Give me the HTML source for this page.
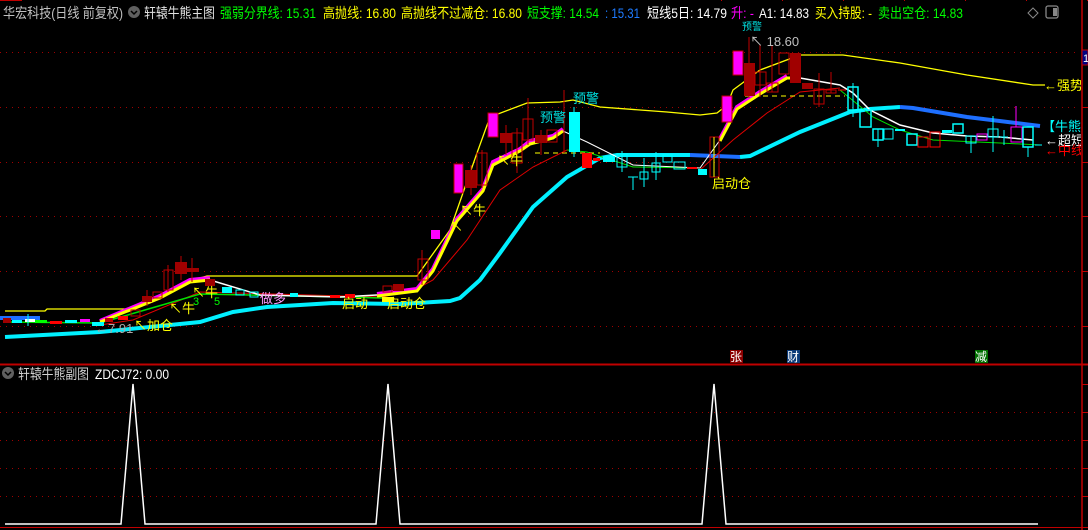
<!DOCTYPE html>
<html><head><meta charset="utf-8"><style>
html,body{margin:0;padding:0;background:#000;}
svg{display:block}
text{font-family:"Liberation Sans","Noto Sans CJK SC",sans-serif;}
</style></head><body>
<svg width="1088" height="530" viewBox="0 0 1088 530" xmlns="http://www.w3.org/2000/svg">
<defs><clipPath id="c"><rect x="0" y="0" width="1081" height="530"/></clipPath></defs>
<rect width="1088" height="530" fill="#000"/>
<!-- grid -->
<g stroke="#a00000" stroke-width="1" stroke-dasharray="1,5">
<line x1="0" y1="52.5" x2="1080" y2="52.5"/><line x1="0" y1="107.5" x2="1080" y2="107.5"/>
<line x1="0" y1="162.5" x2="1080" y2="162.5"/><line x1="0" y1="216.5" x2="1080" y2="216.5"/>
<line x1="0" y1="271.5" x2="1080" y2="271.5"/><line x1="0" y1="326.5" x2="1080" y2="326.5"/>
<line x1="0" y1="412.5" x2="1080" y2="412.5"/><line x1="0" y1="440.5" x2="1080" y2="440.5"/>
<line x1="0" y1="468.5" x2="1080" y2="468.5"/><line x1="0" y1="496.5" x2="1080" y2="496.5"/>
</g>
<line x1="0" y1="364.5" x2="1088" y2="364.5" stroke="#c00000" stroke-width="2"/>
<line x1="0" y1="527.5" x2="1088" y2="527.5" stroke="#c00000" stroke-width="1"/>
<line x1="1082" y1="0" x2="1082" y2="530" stroke="#c00000" stroke-width="1.5"/>
<g stroke="#c00000"><line x1="1082" y1="52.5" x2="1088" y2="52.5"/><line x1="1082" y1="107.5" x2="1088" y2="107.5"/><line x1="1082" y1="162.5" x2="1088" y2="162.5"/><line x1="1082" y1="216.5" x2="1088" y2="216.5"/><line x1="1082" y1="271.5" x2="1088" y2="271.5"/><line x1="1082" y1="326.5" x2="1088" y2="326.5"/>
<line x1="1082" y1="384.5" x2="1088" y2="384.5"/><line x1="1082" y1="412.5" x2="1088" y2="412.5"/><line x1="1082" y1="440.5" x2="1088" y2="440.5"/><line x1="1082" y1="468.5" x2="1088" y2="468.5"/><line x1="1082" y1="496.5" x2="1088" y2="496.5"/></g>
<line x1="0" y1="0.5" x2="22" y2="0.5" stroke="#c00000"/>
<line x1="1088" y1="0.5" x2="700" y2="0.5" stroke="#c00000" stroke-dasharray="1,60"/>
<rect x="1082" y="50" width="6" height="15" fill="#000080" stroke="#c00000"/>
<text x="1083" y="62" font-size="11" fill="#fff">1</text>

<!-- header -->
<g font-size="14">
<text x="3" y="18" fill="#c0c0c0" textLength="120" lengthAdjust="spacingAndGlyphs">华宏科技(日线 前复权)</text>
<circle cx="134" cy="12" r="6" fill="#606060"/><path d="M131 11 l3 3 l3 -3" stroke="#000" stroke-width="1.5" fill="none"/>
<text x="144" y="18" fill="#e0e0e0" textLength="71" lengthAdjust="spacingAndGlyphs">轩辕牛熊主图</text>
<text x="220" y="18" fill="#00ff00" textLength="96" lengthAdjust="spacingAndGlyphs">强弱分界线: 15.31</text>
<text x="323" y="18" fill="#ffff00" textLength="73" lengthAdjust="spacingAndGlyphs">高抛线: 16.80</text>
<text x="401" y="18" fill="#ffff00" textLength="121" lengthAdjust="spacingAndGlyphs">高抛线不过减仓: 16.80</text>
<text x="527" y="18" fill="#00ff00" textLength="72" lengthAdjust="spacingAndGlyphs">短支撑: 14.54</text>
<text x="605" y="18" fill="#1e7bff" textLength="35" lengthAdjust="spacingAndGlyphs">: 15.31</text>
<text x="647" y="18" fill="#fff" textLength="80" lengthAdjust="spacingAndGlyphs">短线5日: 14.79</text>
<text x="731" y="18" fill="#ff00ff" textLength="23" lengthAdjust="spacingAndGlyphs">升: -</text>
<text x="759" y="18" fill="#fff" textLength="50" lengthAdjust="spacingAndGlyphs">A1: 14.83</text>
<text x="815" y="18" fill="#ffff00" textLength="57" lengthAdjust="spacingAndGlyphs">买入持股: -</text>
<text x="878" y="18" fill="#00ff00" textLength="85" lengthAdjust="spacingAndGlyphs">卖出空仓: 14.83</text>
</g>
<path d="M1033 8 l5 5 l-5 5 l-5 -5z" stroke="#888" fill="none"/>
<rect x="1046" y="6" width="12" height="12" rx="2" stroke="#888" fill="none" stroke-width="1.3"/><rect x="1053" y="8" width="4" height="8" fill="#888"/>

<!-- sub header -->
<circle cx="8" cy="373" r="6" fill="#606060"/><path d="M5 372 l3 3 l3 -3" stroke="#000" stroke-width="1.5" fill="none"/>
<text x="18" y="379" font-size="14" fill="#d0d0d0" textLength="71" lengthAdjust="spacingAndGlyphs">轩辕牛熊副图</text>
<text x="95" y="379" font-size="14" fill="#fff" textLength="74" lengthAdjust="spacingAndGlyphs">ZDCJ72: 0.00</text>

<!-- spikes -->
<path d="M5 524 H121 L133 384 L145 524 H376 L388 384 L400 524 H702 L714 384 L726 524 H1038" stroke="#fff" stroke-width="1.5" fill="none"/>

<!-- markers -->
<rect x="730" y="350" width="13" height="13" fill="#8b0000"/><text x="730" y="361" font-size="12" fill="#fff">张</text>
<rect x="787" y="350" width="13" height="13" fill="#0a3a78"/><text x="787" y="361" font-size="12" fill="#fff">财</text>
<rect x="975" y="350" width="13" height="13" fill="#007000"/><text x="975" y="361" font-size="12" fill="#fff">减</text>

<g clip-path="url(#c)">
<polyline fill="none" stroke="#ffff00" stroke-width="1.3" points="5,311 45,311 47,309 135,309 160,298 185,283 200,278 207,276 417,276 450,230 477,153 490,117 527,103 560,102 573,100 600,107 667,112 700,115 717,113 727,105 733,90 760,70 800,55 843,55 900,63 967,75 1033,85 1045,85"/>
<polyline fill="none" stroke="#00f0ff" stroke-width="4" points="5,337 100,332 200,322 233,312 267,307 333,303 400,304 450,301 460,298 480,280 500,253 533,207 567,177 600,158 617,155 690,155"/>
<polyline fill="none" stroke="#1e6fff" stroke-width="4" points="690,155 740,157"/>
<polyline fill="none" stroke="#00f0ff" stroke-width="4" points="740,157 750,156 800,132 850,112 870,109 900,107"/>
<polyline fill="none" stroke="#1e6fff" stroke-width="4" points="900,107 913,108 967,117 1040,126"/>
<polyline fill="none" stroke="#1e6fff" stroke-width="4" points="0,318 40,318"/>
<polyline fill="none" stroke="#e00000" stroke-width="1" points="100,325 133,320 200,292 383,297 420,287 433,280 467,240 500,190 533,167 567,150 567,150"/>
<polyline fill="none" stroke="#e00000" stroke-width="1" points="700,170 733,140 767,113 800,92 840,88"/>
<polyline fill="none" stroke="#00e000" stroke-width="1" points="567,150 587,152 633,167 700,168"/>
<polyline fill="none" stroke="#00e000" stroke-width="1" points="840,90 873,117 900,130 933,140 1000,143 1040,145"/>
<polyline fill="none" stroke="#00e000" stroke-width="1.5" points="5,322 100,323 200,294 300,296 383,298"/>
<polyline fill="none" stroke="#ff00ff" stroke-width="4" points="100,321 160,296 190,280 210,278"/>
<polyline fill="none" stroke="#ffff00" stroke-width="3" points="100,322 160,298 190,282 210,280"/>
<polyline fill="none" stroke="#fff" stroke-width="1.5" points="210,280 260,295 340,297 377,295"/>
<polyline fill="none" stroke="#ff00ff" stroke-width="4" points="377,294 417,289 433,269 457,219 483,189 493,162 520,149 530,141 553,136 563,129"/>
<polyline fill="none" stroke="#ffff00" stroke-width="3" points="377,296 417,291 433,271 457,221 483,191 493,165 520,151 530,144 553,138 563,131"/>
<polyline fill="none" stroke="#fff" stroke-width="1" points="563,131 587,142 633,165 700,168 720,140"/>
<polyline fill="none" stroke="#ff00ff" stroke-width="4" points="720,139 737,107 760,92 787,76"/>
<polyline fill="none" stroke="#ffff00" stroke-width="3" points="720,141 737,109 760,94 787,78 800,78"/>
<polyline fill="none" stroke="#fff" stroke-width="1.5" points="800,78 840,85 853,93 870,110 900,125 933,133 967,136 1000,137 1033,140"/>
<line x1="535" y1="153" x2="600" y2="153" stroke="#ffff00" stroke-dasharray="5,4"/>
<line x1="745" y1="96" x2="845" y2="96" stroke="#ffff00" stroke-dasharray="5,4"/>

<g>
<rect x="3" y="318" width="8" height="5" fill="#a00000"/><rect x="12" y="320" width="10" height="3" fill="#00ffff"/>
<rect x="25" y="319" width="10" height="3" fill="#fff"/><rect x="35" y="320" width="12" height="3" fill="#00ff00"/>
<rect x="50" y="321" width="12" height="3" fill="#ff0000"/><rect x="65" y="320" width="12" height="3" fill="#00ffff"/>
<rect x="80" y="319" width="10" height="3" fill="#ff00ff"/><rect x="92" y="322" width="12" height="4" fill="#00ffff"/>
<rect x="105" y="318" width="8" height="4" fill="#c00000"/><rect x="118" y="316" width="10" height="4" fill="#ff0000"/>
<line x1="28" y1="314" x2="28" y2="326" stroke="#00ffff"/>
</g>
<g stroke-width="1">
<rect x="131" y="310" width="9" height="6" fill="none" stroke="#c00000"/>
<line x1="147" y1="290" x2="147" y2="306" stroke="#c00000"/><rect x="142" y="296" width="10" height="6" fill="#a00000"/>
<rect x="153" y="292" width="9" height="6" fill="none" stroke="#c00000"/>
<line x1="168" y1="265" x2="168" y2="292" stroke="#c00000"/><rect x="164" y="270" width="9" height="20" fill="none" stroke="#c00000"/>
<line x1="181" y1="256" x2="181" y2="280" stroke="#c00000"/><rect x="175" y="262" width="12" height="12" fill="#a00000"/>
<line x1="192" y1="258" x2="192" y2="282" stroke="#c00000"/><rect x="187" y="268" width="12" height="4" fill="#a00000"/>
<rect x="205" y="279" width="10" height="7" fill="#a00000"/>
<rect x="222" y="287" width="10" height="6" fill="#00ffff"/><rect x="236" y="290" width="8" height="5" fill="none" stroke="#00ffff"/>
<rect x="250" y="292" width="8" height="5" fill="none" stroke="#00ffff"/><rect x="290" y="293" width="8" height="4" fill="#00ffff"/>
<rect x="330" y="295" width="10" height="3" fill="#ff0000"/><rect x="345" y="294" width="10" height="4" fill="#ff0000"/>
<rect x="383" y="286" width="9" height="6" fill="none" stroke="#c00000"/><rect x="393" y="284" width="11" height="7" fill="#a00000"/>
<rect x="382" y="297" width="12" height="5" fill="#ffff00"/>
<line x1="422" y1="250" x2="422" y2="285" stroke="#c00000"/><rect x="418" y="259" width="10" height="21" fill="none" stroke="#c00000"/>
<rect x="431" y="230" width="9" height="9" fill="#ff00ff"/>
<rect x="454" y="164" width="9" height="29" fill="#ff00ff" stroke="#c00000"/>
<line x1="471" y1="165" x2="471" y2="195" stroke="#c00000"/><rect x="465" y="170" width="12" height="18" fill="#a00000"/>
<line x1="482" y1="150" x2="482" y2="188" stroke="#c00000"/><rect x="477" y="153" width="10" height="32" fill="none" stroke="#c00000"/>
<rect x="488" y="113" width="10" height="24" fill="#ff00ff" stroke="#c00000"/>
<line x1="506" y1="125" x2="506" y2="155" stroke="#c00000"/><rect x="500" y="133" width="12" height="10" fill="#a00000"/>
<line x1="517" y1="128" x2="517" y2="173" stroke="#c00000"/><rect x="512" y="133" width="10" height="30" fill="none" stroke="#c00000"/>
<line x1="528" y1="98" x2="528" y2="145" stroke="#c00000"/><rect x="523" y="119" width="10" height="21" fill="none" stroke="#c00000"/>
<line x1="541" y1="130" x2="541" y2="155" stroke="#c00000"/><rect x="535" y="135" width="12" height="8" fill="#a00000"/>
<rect x="547" y="130" width="10" height="12" fill="none" stroke="#c00000"/>
<line x1="564" y1="90" x2="564" y2="153" stroke="#c00000"/>
<line x1="574" y1="107" x2="574" y2="157" stroke="#00ffff"/><rect x="569" y="112" width="11" height="40" fill="#00ffff"/>
<rect x="582" y="153" width="10" height="15" fill="#ff0000"/><rect x="593" y="158" width="7" height="3" fill="#ff0000"/>
<rect x="603" y="156" width="12" height="6" fill="#00ffff"/>
<line x1="622" y1="151" x2="622" y2="172" stroke="#00ffff"/><rect x="617" y="154" width="10" height="13" fill="none" stroke="#00ffff"/>
<line x1="628" y1="177" x2="638" y2="177" stroke="#00ffff"/><line x1="633" y1="177" x2="633" y2="190" stroke="#00ffff"/>
<line x1="644" y1="158" x2="644" y2="187" stroke="#00ffff"/><rect x="640" y="172" width="8" height="7" fill="none" stroke="#00ffff"/>
<line x1="656" y1="152" x2="656" y2="180" stroke="#00ffff"/><rect x="652" y="163" width="8" height="9" fill="none" stroke="#00ffff"/>
<rect x="663" y="155" width="9" height="7" fill="none" stroke="#00ffff"/>
<rect x="674" y="162" width="11" height="7" fill="none" stroke="#00ffff"/>
<rect x="687" y="167" width="10" height="2" fill="#ff0000"/>
<rect x="698" y="169" width="9" height="6" fill="#00ffff"/>
<rect x="710" y="137" width="9" height="40" fill="none" stroke="#c00000"/><line x1="714" y1="137" x2="714" y2="177" stroke="#ffff00"/>
<rect x="722" y="96" width="10" height="26" fill="#ff00ff" stroke="#c00000"/>
<rect x="733" y="51" width="10" height="24" fill="#ff00ff" stroke="#c00000"/>
<line x1="749" y1="37" x2="749" y2="98" stroke="#c00000"/><rect x="744" y="63" width="11" height="33" fill="#a00000"/>
<line x1="760" y1="45" x2="760" y2="97" stroke="#c00000"/><rect x="755" y="72" width="11" height="13" fill="none" stroke="#c00000"/>
<line x1="772" y1="45" x2="772" y2="92" stroke="#c00000"/><rect x="767" y="83" width="11" height="9" fill="none" stroke="#c00000"/>
<rect x="779" y="53" width="10" height="21" fill="none" stroke="#c00000"/>
<line x1="795" y1="53" x2="795" y2="83" stroke="#c00000"/><rect x="790" y="53" width="11" height="30" fill="#a00000"/>
<rect x="802" y="83" width="11" height="6" fill="#a00000"/>
<line x1="819" y1="73" x2="819" y2="107" stroke="#c00000"/><rect x="814" y="89" width="10" height="15" fill="none" stroke="#c00000"/>
<line x1="831" y1="72" x2="831" y2="93" stroke="#c00000"/><rect x="826" y="90" width="10" height="3" fill="none" stroke="#c00000"/>
<line x1="838" y1="90" x2="846" y2="90" stroke="#ff0000"/>
<line x1="853" y1="83" x2="853" y2="117" stroke="#00ffff"/><rect x="848" y="87" width="10" height="23" fill="none" stroke="#00ffff" stroke-width="1.5"/>
<rect x="860" y="110" width="11" height="17" fill="none" stroke="#00ffff" stroke-width="1.5"/>
<line x1="878" y1="129" x2="878" y2="147" stroke="#00ffff"/><rect x="873" y="129" width="10" height="11" fill="none" stroke="#00ffff" stroke-width="1.5"/>
<rect x="884" y="129" width="9" height="10" fill="none" stroke="#00ffff"/>
<rect x="895" y="129" width="10" height="2" fill="#00ffff"/>
<rect x="907" y="134" width="10" height="11" fill="none" stroke="#00ffff" stroke-width="1.5"/>
<rect x="918" y="137" width="10" height="10" fill="none" stroke="#ff0000"/>
<rect x="930" y="132" width="10" height="15" fill="none" stroke="#ff0000"/>
<rect x="942" y="130" width="10" height="3" fill="#00ffff"/>
<rect x="953" y="124" width="10" height="9" fill="none" stroke="#00ffff" stroke-width="1.5"/>
<line x1="971" y1="136" x2="971" y2="153" stroke="#00ffff"/><rect x="966" y="136" width="10" height="7" fill="none" stroke="#00ffff"/>
<rect x="977" y="134" width="10" height="6" fill="none" stroke="#ff00ff"/>
<line x1="993" y1="116" x2="993" y2="152" stroke="#00ffff"/><rect x="988" y="129" width="10" height="8" fill="none" stroke="#00ffff"/>
<line x1="1000" y1="137" x2="1008" y2="137" stroke="#00ffff"/><line x1="1004" y1="130" x2="1004" y2="145" stroke="#00ffff"/>
<line x1="1016" y1="106" x2="1016" y2="127" stroke="#ff00ff"/><rect x="1011" y="127" width="11" height="15" fill="none" stroke="#ff00ff"/>
<line x1="1028" y1="147" x2="1028" y2="157" stroke="#00ffff"/><rect x="1023" y="127" width="10" height="20" fill="none" stroke="#00ffff" stroke-width="1.5"/>
<line x1="1035" y1="145" x2="1042" y2="145" stroke="#00ffff"/>
</g>

<g font-size="13">
<text x="573" y="103" fill="#00e0e0">预警</text>
<text x="540" y="122" fill="#00e0e0">预警</text>
<text x="742" y="30" fill="#00e0e0" font-size="10">预警</text>
<text x="712" y="188" fill="#ffff00">启动仓</text>
<text x="750" y="46" fill="#c0c0c0">↖ 18.60</text>
<text x="1044" y="90" fill="#ffff00">←强势上</text>
<text x="1042" y="131" fill="#00ffff">【牛熊分</text>
<text x="1045" y="145" fill="#fff">←超短</text>
<text x="1045" y="155" fill="#ff0000">←中线</text>
<text x="134" y="330" fill="#ffff00">↖加仓</text>
<text x="95" y="333" fill="#aaa">←7.91</text>
<text x="169" y="313" fill="#ffff00">↖牛</text>
<text x="192" y="297" fill="#ffff00">↖牛</text>
<text x="193" y="305" fill="#00ff00" font-size="11">3</text>
<text x="214" y="305" fill="#00ff00" font-size="11">5</text>
<text x="260" y="303" fill="#ff99ff">做多</text>
<text x="342" y="308" fill="#ffff00">启动</text>
<text x="387" y="308" fill="#ffff00">启动仓</text>
<text x="460" y="215" fill="#ffff00">↖牛</text>
<text x="450" y="231" fill="#ffff00">↖</text>
<text x="497" y="165" fill="#ffff00">↖牛</text>
</g>
</g>
</svg>
</body></html>
